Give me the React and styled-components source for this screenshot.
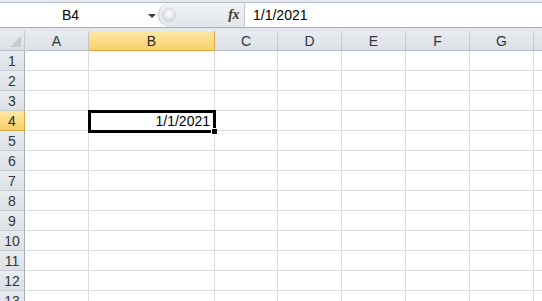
import React from "react";
import styled, { createGlobalStyle, css } from "styled-components";

const Global = createGlobalStyle`
  html, body { margin: 0; padding: 0; background: #fff; }
  body { width: 542px; height: 301px; overflow: hidden; font-family: "Liberation Sans", Arial, sans-serif; }
  * { box-sizing: border-box; }
`;

const Page = styled.div`
  width: 542px;
  height: 301px;
  overflow: hidden;
  display: flex;
  flex-direction: column;
`;

const TopArea = styled.div`
  height: 31px;
  flex: none;
  background: #e4e7eb;
  padding-top: 2px;
  display: flex;
  flex-direction: column;
`;

const FormulaBar = styled.div`
  height: 26px;
  display: flex;
  align-items: stretch;
  background: #fff;
  border-top: 1px solid #b9bfc7;
  border-bottom: 1px solid #a9b0b9;
`;

const NameBox = styled.div`
  width: 158px;
  flex: none;
  display: flex;
  align-items: center;
  font-size: 14px;
  color: #000;
`;

const NameText = styled.span`
  width: 141px;
  text-align: center;
`;

const Arrow = styled.span`
  width: 0;
  height: 0;
  border-left: 4px solid transparent;
  border-right: 4px solid transparent;
  border-top: 4px solid #3b3b3b;
  margin-left: 7px;
  margin-top: 1px;
`;

const Controls = styled.div`
  width: 87px;
  flex: none;
  display: flex;
  align-items: center;
  justify-content: space-between;
  padding-left: 2px;
  padding-right: 5px;
  background: linear-gradient(#f1f3f5, #e2e5e9);
  border-left: 1px solid #c3c8cf;
  border-top-left-radius: 12px;
  border-bottom-left-radius: 12px;
  border-right: 1px solid #c5cad1;
`;

const Grip = styled.span`
  width: 14px;
  height: 14px;
  border-radius: 50%;
  background: radial-gradient(circle at 50% 40%, #ffffff 0%, #e8eaed 45%, #c7ccd2 100%);
  border: 1px solid #d4d8dd;
  margin-left: 1px;
`;

const Fx = styled.span`
  font-family: "Liberation Serif", "Times New Roman", serif;
  font-style: italic;
  font-weight: bold;
  font-size: 14px;
  color: #3a3a3a;
  letter-spacing: -0.5px;
`;

const FormulaInput = styled.div`
  flex: 1;
  display: flex;
  align-items: center;
  padding-left: 8px;
  font-size: 14px;
  color: #000;
`;

const SheetWrap = styled.div`
  position: relative;
  flex: 1;
  overflow: hidden;
`;

const Grid = styled.div`
  display: grid;
  grid-template-columns: 25px 64px 126px 63px 64px 64px 64px 64px 64px;
  grid-auto-rows: 20px;
`;

const HeaderCell = styled.div`
  display: flex;
  align-items: center;
  justify-content: center;
  font-size: 14px;
  color: #2f3640;
  background: linear-gradient(#e8ebef, #dde1e6);
  border-right: 1px solid #c3c8cf;
  border-bottom: 1px solid #b8bec6;
  ${(p) =>
    p.$active &&
    css`
      background: linear-gradient(#fde9a6, #f7cf6b);
      border-right-color: #e2a841;
      border-bottom-color: #e2a841;
      color: #2a2a2a;
    `}
`;

const Corner = styled(HeaderCell)`
  position: relative;
  &::after {
    content: "";
    position: absolute;
    right: 3px;
    bottom: 3px;
    width: 0;
    height: 0;
    border-left: 11px solid transparent;
    border-bottom: 11px solid #c7ccd2;
  }
`;

const RowHeader = styled(HeaderCell)`
  border-right-color: #a5adb7;
  border-bottom-color: #c9cdd3;
  padding-top: 1px;
  ${(p) =>
    p.$active &&
    css`
      border-right-color: #e2a841;
      border-bottom-color: #e2a841;
    `}
`;

const Cell = styled.div`
  border-right: 1px solid #dadcdd;
  border-bottom: 1px solid #dadcdd;
  font-size: 14px;
  color: #000;
  display: flex;
  align-items: center;
  justify-content: flex-end;
  padding-right: 4px;
  padding-top: 1px;
  background: #fff;
`;

const Selection = styled.div`
  position: absolute;
  left: 88px;
  top: 79px;
  width: 128px;
  height: 23px;
  border: 2px solid #000;
  outline: 1px solid #000;
  outline-offset: -3px;
  pointer-events: none;
`;

const FillHandle = styled.div`
  position: absolute;
  left: 211px;
  top: 97px;
  width: 7px;
  height: 7px;
  background: #000;
  border: 1px solid #fff;
`;

const COLS = ["A", "B", "C", "D", "E", "F", "G", "H"];
const ROWS = Array.from({ length: 13 }, (_, i) => i + 1);

export default function App() {
  return (
    <Page>
      <Global />
      <TopArea>
        <FormulaBar>
          <NameBox>
            <NameText>B4</NameText>
            <Arrow />
          </NameBox>
          <Controls>
            <Grip />
            <Fx>fx</Fx>
          </Controls>
          <FormulaInput>1/1/2021</FormulaInput>
        </FormulaBar>
      </TopArea>
      <SheetWrap>
        <Grid>
          <Corner />
          {COLS.map((c) => (
            <HeaderCell key={c} $active={c === "B"}>
              {c === "H" ? "" : c}
            </HeaderCell>
          ))}
          {ROWS.map((r) => (
            <React.Fragment key={r}>
              <RowHeader $active={r === 4}>{r}</RowHeader>
              {COLS.map((c) => (
                <Cell key={c}>{r === 4 && c === "B" ? "1/1/2021" : ""}</Cell>
              ))}
            </React.Fragment>
          ))}
        </Grid>
        <Selection />
        <FillHandle />
      </SheetWrap>
    </Page>
  );
}
